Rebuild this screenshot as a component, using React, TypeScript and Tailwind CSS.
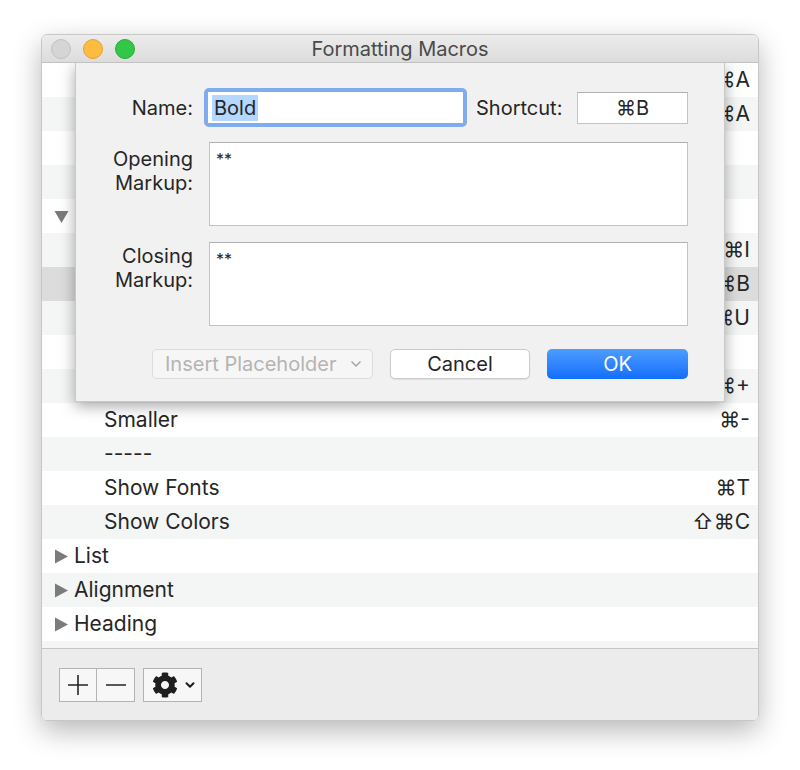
import { FaCog } from "react-icons/fa";
import { ChevronDown } from "lucide-react";

type Row = {
  label: string;
  shortcut?: string;
  level: 0 | 1;
  group?: "open" | "closed";
  selected?: boolean;
};

// rows under the sheet keep only what peeks out past its edges
const rows: Row[] = [
  { label: "", shortcut: "⌘A", level: 1 },
  { label: "", shortcut: "⌘A", level: 1 },
  { label: "", level: 1 },
  { label: "", level: 1 },
  { label: "", level: 0, group: "open" },
  { label: "", shortcut: "⌘I", level: 1 },
  { label: "", shortcut: "⌘B", level: 1, selected: true },
  { label: "", shortcut: "⌘U", level: 1 },
  { label: "", level: 1 },
  { label: "", shortcut: "⌘+", level: 1 },
  { label: "Smaller", shortcut: "⌘-", level: 1 },
  { label: "-----", level: 1 },
  { label: "Show Fonts", shortcut: "⌘T", level: 1 },
  { label: "Show Colors", shortcut: "⇧⌘C", level: 1 },
  { label: "List", level: 0, group: "closed" },
  { label: "Alignment", level: 0, group: "closed" },
  { label: "Heading", level: 0, group: "closed" },
  { label: "", level: 0 },
];

const font = "font-['Inter','DejaVu_Sans',sans-serif]";

function Disclosure({ open }: { open: boolean }) {
  return (
    <svg width="15" height="15" viewBox="0 0 15 15" className="shrink-0">
      {open ? (
        <polygon points="0.5,2 14.5,2 7.5,14" fill="#7b7b7b" />
      ) : (
        <polygon points="1,0.5 14,7.5 1,14.5" fill="#7b7b7b" />
      )}
    </svg>
  );
}

function MacroRow({ row, index }: { row: Row; index: number }) {
  const bg = row.selected ? "bg-[#dcdcdc]" : index % 2 === 0 ? "bg-white" : "bg-[#f4f5f5]";
  return (
    <div className={`h-[34px] shrink-0 flex items-center pr-[8px] ${bg}`}>
      {row.group ? (
        <div className="flex items-center pl-[12px] gap-[5px]">
          <Disclosure open={row.group === "open"} />
          {row.label && <span>{row.label}</span>}
        </div>
      ) : (
        row.label && <span className="pl-[62px]">{row.label}</span>
      )}
      {row.shortcut && <span className="ml-auto">{row.shortcut}</span>}
    </div>
  );
}

function EditSheet() {
  return (
    <div className="absolute top-0 left-[33px] w-[650px] h-[339px] bg-[#f1f1f1] shadow-[0_4px_14px_rgba(0,0,0,0.35)] border-x border-b border-[#c9c9c9] flex flex-col pt-[25px] pr-[36px] text-[20px] text-[#262626]">
      {/* name + shortcut */}
      <div className="flex items-center">
        <div className="w-[117px] text-right">Name:</div>
        <div className="ml-[11px] w-[263px] h-[39px] shrink-0 rounded-[5px] bg-[#80abee] p-[4px]">
          <div className="h-full bg-white flex items-center pl-[4px]">
            <span className="bg-[#b3d7ff] leading-[26px] px-[2px]">Bold</span>
          </div>
        </div>
        <div className="ml-[9px]">Shortcut:</div>
        <div className="ml-auto w-[111px] h-[32px] bg-white border border-[#c3c3c3] border-t-[#b0b0b0] flex items-center justify-center">
          ⌘B
        </div>
      </div>

      {/* opening markup */}
      <div className="flex mt-[15px]">
        <div className="w-[117px] text-right leading-[24px] pt-[5px]">
          Opening
          <br />
          Markup:
        </div>
        <div className="ml-[16px] flex-1 h-[84px] bg-white border border-[#c3c3c3] border-t-[#b0b0b0] px-[6px] pt-[4px] text-[16px]">
          **
        </div>
      </div>

      {/* closing markup */}
      <div className="flex mt-[16px]">
        <div className="w-[117px] text-right leading-[24px] pt-[2px]">
          Closing
          <br />
          Markup:
        </div>
        <div className="ml-[16px] flex-1 h-[84px] bg-white border border-[#c3c3c3] border-t-[#b0b0b0] px-[6px] pt-[4px] text-[16px]">
          **
        </div>
      </div>

      {/* buttons */}
      <div className="flex justify-end gap-[17px] mt-[23px]">
        <div className="w-[221px] h-[30px] rounded-[5px] bg-[#f6f6f6] border border-[#dcdcdc] flex items-center pl-[12px] pr-[8px] text-[#b4b4b4]">
          <span>Insert Placeholder</span>
          <ChevronDown size={16} strokeWidth={2.5} className="ml-auto text-[#a8a8a8]" />
        </div>
        <div className="w-[140px] h-[30px] rounded-[5px] bg-white border border-[#cbcbcb] shadow-[0_1px_1px_rgba(0,0,0,0.08)] flex items-center justify-center">
          Cancel
        </div>
        <div className="w-[141px] h-[30px] rounded-[5px] bg-gradient-to-b from-[#4d9cfe] to-[#0f6dfb] flex items-center justify-center text-white">
          OK
        </div>
      </div>
    </div>
  );
}

export default function App() {
  return (
    <div className={`w-[800px] h-[770px] bg-white pt-[34px] pl-[41px] ${font} text-[#262626]`}>
      <div className="w-[718px] h-[687px] rounded-[6px] overflow-hidden flex flex-col border border-[#c7c7c7] shadow-[0_10px_28px_rgba(0,0,0,0.28)]">
        {/* title bar */}
        <div className="h-[28px] shrink-0 bg-gradient-to-b from-[#ececec] to-[#dcdcdc] border-b border-[#c2c2c2] flex items-center relative">
          <div className="flex items-center gap-[12px] pl-[9px]">
            <span className="w-[20px] h-[20px] rounded-full bg-[#d5d5d5] border border-[#c0c0c0]" />
            <span className="w-[20px] h-[20px] rounded-full bg-[#fdbc40] border border-[#e0a233]" />
            <span className="w-[20px] h-[20px] rounded-full bg-[#33c748] border border-[#27aa35]" />
          </div>
          <div className="absolute inset-0 flex items-center justify-center text-[20px] text-[#4a4a4a] pointer-events-none">
            Formatting Macros
          </div>
        </div>

        {/* list + sheet */}
        <div className="relative flex-1 flex flex-col overflow-hidden text-[21px]">
          <div className="flex-1 flex flex-col overflow-hidden">
            {rows.map((row, i) => (
              <MacroRow key={i} row={row} index={i} />
            ))}
          </div>
          <EditSheet />
        </div>

        {/* bottom bar */}
        <div className="h-[72px] shrink-0 bg-[#ececec] border-t border-[#c6c6c6] flex items-start pt-[19px] pl-[17px] gap-[8px]">
          <div className="flex h-[34px] border border-[#b3b3b3] bg-[#f7f7f7]">
            <div className="w-[37px] flex items-center justify-center border-r border-[#b3b3b3]">
              <svg width="22" height="22" viewBox="0 0 22 22">
                <line x1="11" y1="1" x2="11" y2="21" stroke="#222" strokeWidth="1.6" />
                <line x1="1" y1="11" x2="21" y2="11" stroke="#222" strokeWidth="1.6" />
              </svg>
            </div>
            <div className="w-[37px] flex items-center justify-center">
              <svg width="22" height="22" viewBox="0 0 22 22">
                <line x1="1" y1="11" x2="21" y2="11" stroke="#222" strokeWidth="1.6" />
              </svg>
            </div>
          </div>
          <div className="w-[59px] h-[34px] border border-[#b3b3b3] bg-[#f7f7f7] flex items-center pl-[8px] gap-[5px]">
            <FaCog size={26} color="#1e1e1e" />
            <ChevronDown size={14} strokeWidth={3.5} color="#1e1e1e" />
          </div>
        </div>
      </div>
    </div>
  );
}
